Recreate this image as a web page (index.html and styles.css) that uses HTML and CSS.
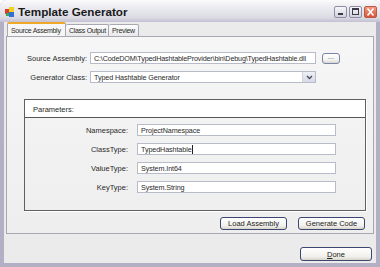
FILE: index.html
```html
<!DOCTYPE html>
<html lang="en">
<head>
    <meta charset="UTF-8">
    <title>Template Generator</title>
    <link rel="stylesheet" href="styles.css">
</head>
<body>
    <div class="window">
        <div class="titlebar">
            <svg class="app-icon" width="10" height="10" viewBox="0 0 10 10">
                <rect x="0" y="2" width="5" height="5" fill="#e03a2a"/>
                <rect x="4" y="0" width="5" height="5" fill="#f2d21c"/>
                <rect x="4" y="5" width="5" height="5" fill="#2f6fd8"/>
                <rect x="1" y="6" width="3" height="3" fill="#3aa84a"/>
            </svg>
            <span class="title">Template Generator</span>
            <div class="controls">
                <span class="ctl"><svg width="13" height="12" viewBox="0 0 13 12"><rect x="4" y="7" width="5" height="2" fill="#3a3a4a"/></svg></span>
                <span class="ctl"><svg width="13" height="12" viewBox="0 0 13 12"><rect x="3.5" y="2.5" width="6" height="6" fill="none" stroke="#3a3a4a"/><rect x="3" y="2" width="7" height="2" fill="#3a3a4a"/></svg></span>
                <span class="ctl close"><svg width="13" height="12" viewBox="0 0 13 12"><path d="M3.5 2.5 L9.5 9.5 M9.5 2.5 L3.5 9.5" stroke="#fff" stroke-width="1.6"/></svg></span>
            </div>
        </div>

        <div class="client">
            <div class="tabs">
                <div class="tab active">Source Assembly</div>
                <div class="tab">Class Output</div>
                <div class="tab">Preview</div>
            </div>

            <div class="page">
                <div class="row">
                    <label class="lbl">Source Assembly:</label>
                    <div class="field path">C:\CodeDOM\TypedHashtableProvider\bin\Debug\TypedHashtable.dll</div>
                    <div class="btn browse">...</div>
                </div>
                <div class="row second">
                    <label class="lbl">Generator Class:</label>
                    <div class="field combo">
                        <span>Typed Hashtable Generator</span>
                        <span class="drop"><svg width="7" height="5" viewBox="0 0 7 5"><path d="M1 1 L3.5 3.5 L6 1" fill="none" stroke="#4a4a5a" stroke-width="1.3"/></svg></span>
                    </div>
                </div>

                <div class="group">
                    <div class="group-head">Parameters:</div>
                    <div class="params">
                        <div class="prow"><label class="plbl">Namespace:</label><div class="field pfield">ProjectNamespace</div></div>
                        <div class="prow"><label class="plbl">ClassType:</label><div class="field pfield">TypedHashtable<span class="caret"></span></div></div>
                        <div class="prow"><label class="plbl">ValueType:</label><div class="field pfield">System.Int64</div></div>
                        <div class="prow"><label class="plbl">KeyType:</label><div class="field pfield">System.String</div></div>
                    </div>
                </div>

                <div class="actions">
                    <div class="btn action">Load Assembly</div>
                    <div class="btn action">Generate Code</div>
                </div>
            </div>

            <div class="footer">
                <div class="btn done"><u>D</u>one</div>
            </div>
        </div>
    </div>
</body>
</html>
```

FILE: styles.css
```css
body {
    margin: 0;
    font-family: "Liberation Sans", Arial, sans-serif;
    font-size: 7.5px;
    color: #2a2a2a;
}
.window {
    width: 380px;
    height: 267px;
    background: #b3b0c6;
    border-radius: 6px 6px 0 0;
    overflow: hidden;
    display: flex;
    flex-direction: column;
}
.titlebar {
    height: 22px;
    flex: none;
    display: flex;
    align-items: center;
    padding: 0 3px 0 5px;
    background: linear-gradient(#fbfbfc, #ebebf0 35%, #dcdbe4 80%, #c2c0d2);
}
.app-icon { margin-top: 1px; }
.title {
    font-weight: bold;
    font-size: 11.7px;
    color: #1a1a1a;
    margin-left: 3px;
    flex: 1;
}
.controls { display: flex; gap: 2px; margin-top: 1px; }
.ctl {
    width: 13px;
    height: 12px;
    box-sizing: border-box;
    border: 1px solid #8e8ca6;
    border-radius: 2px;
    background: linear-gradient(#f7f7fa, #d2d1dc);
    display: flex;
}
.ctl svg { margin: -1px; }
.ctl.close {
    border-color: #b85a48;
    background: linear-gradient(#f09c82, #d8553a);
}
.client {
    flex: 1;
    margin: 0 4px 4px;
    background: #ecebec;
    display: flex;
    flex-direction: column;
}
.tabs {
    display: flex;
    height: 12px;
    margin: 2px 0 0 3px;
    position: relative;
    z-index: 1;
    font-size: 7px;
    letter-spacing: -0.3px;
}
.tab {
    box-sizing: border-box;
    height: 12px;
    padding: 2px 0 0 3px;
    border: 1px solid #a9a8b2;
    border-bottom: none;
    border-left: none;
    background: linear-gradient(#fdfdfd, #e9e8ea);
    border-radius: 2px 2px 0 0;
    white-space: nowrap;
}
.tab:nth-child(2) { width: 43px; }
.tab:nth-child(3) { width: 30px; }
.tab.active {
    width: 59px;
    height: 14px;
    margin-top: -2px;
    padding-top: 3px;
    border-left: 1px solid #a9a8b2;
    border-top: 2px solid #f0a828;
    background: #f6f6f6;
}
.page {
    box-sizing: border-box;
    width: 368px;
    height: 198px;
    margin-left: 2px;
    border: 1px solid #a9a8b2;
    background: linear-gradient(#f6f6f6, #efeeee);
    padding-top: 15px;
}
.row {
    display: flex;
    align-items: center;
    height: 12px;
}
.row.second { margin-top: 7px; }
.lbl {
    width: 80px;
    margin-right: 3px;
    text-align: right;
}
.field {
    box-sizing: border-box;
    height: 12px;
    border: 1px solid #b8bcc8;
    background: #fff;
    padding-left: 3px;
    display: flex;
    align-items: center;
    white-space: nowrap;
    overflow: hidden;
    font-size: 7.2px;
    letter-spacing: -0.1px;
}
.field.path { letter-spacing: -0.16px; }
.row .field { width: 226px; }
.combo { justify-content: space-between; padding-right: 0; }
.drop {
    width: 12px;
    height: 10px;
    background: linear-gradient(#eef0f6, #d6dae6);
    border-left: 1px solid #d0d4de;
    display: flex;
    align-items: center;
    justify-content: center;
}
.btn {
    box-sizing: border-box;
    border: 1px solid #3d4670;
    border-radius: 3px;
    background: linear-gradient(#ffffff, #f1f0ec 70%, #d8d5cc);
    display: flex;
    align-items: center;
    justify-content: center;
    color: #222;
}
.browse {
    width: 18px;
    height: 11px;
    margin-left: 6px;
    border-color: #7a84a8;
    color: #5a6090;
    line-height: 1;
    padding-bottom: 2px;
}
.group {
    box-sizing: border-box;
    width: 342px;
    height: 112px;
    margin: 16px 0 0 17px;
    border: 1px solid #606060;
    box-shadow: 1px 1px 0 #fff;
}
.group-head {
    height: 18px;
    box-sizing: border-box;
    background: #fff;
    border-bottom: 1px solid #555;
    padding: 5px 0 0 8px;
}
.params {
    padding-top: 6px;
    display: flex;
    flex-direction: column;
    gap: 7px;
}
.prow {
    display: flex;
    align-items: center;
    height: 12px;
}
.plbl {
    width: 103px;
    margin-right: 9px;
    text-align: right;
}
.pfield { width: 199px; }
.caret {
    display: inline-block;
    width: 1px;
    height: 9px;
    background: #222;
}
.actions {
    display: flex;
    justify-content: flex-end;
    gap: 11px;
    margin: 6px 8px 0 0;
}
.action {
    width: 67px;
    height: 13px;
}
.footer {
    display: flex;
    justify-content: flex-end;
    margin: 13px 4px 0 0;
}
.done {
    width: 72px;
    height: 14px;
}
```
